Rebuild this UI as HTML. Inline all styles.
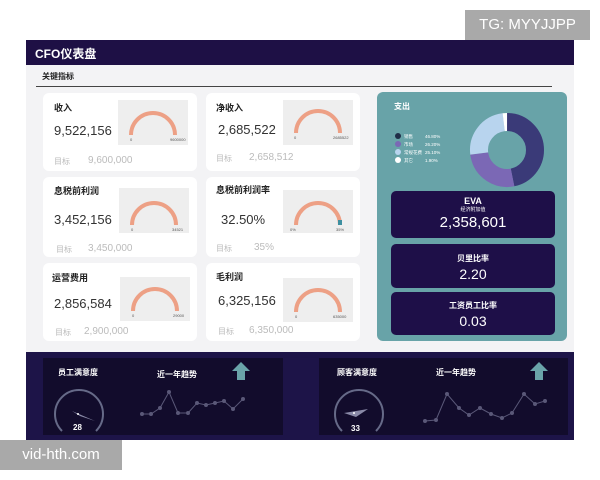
<!DOCTYPE html>
<html><head><meta charset="utf-8"><style>
*{margin:0;padding:0;box-sizing:border-box}
body{width:600px;height:480px;background:#fff;position:relative;overflow:hidden;font-family:"Liberation Sans","Noto Sans CJK SC",sans-serif}
.a{position:absolute}
.card{position:absolute;background:#fff;border-radius:6px}
.t{position:absolute;font-size:9px;font-weight:bold;color:#222}
.v{position:absolute;font-size:13px;color:#333}
.g{position:absolute;font-size:8px;color:#bbb}
.dk{position:absolute;background:#1e0f48;border-radius:5px;left:391px;width:164px;color:#fff;text-align:center}
.w{color:#fff;font-weight:bold;font-size:8px}
</style></head><body>
<div class="a" style="left:26px;top:40px;width:548px;height:400px;background:#f3f3f5"></div>
<div class="a" style="left:26px;top:40px;width:548px;height:25px;background:#1e1045"></div>
<div class="a" style="left:35px;top:45px;color:#fff;font-weight:bold;font-size:12px">CFO仪表盘</div>
<div class="a" style="left:42px;top:71px;font-size:8px;font-weight:bold;color:#222">关键指标</div>
<div class="a" style="left:36px;top:86px;width:516px;height:1px;background:#444"></div>

<div class="card" style="left:43px;top:93px;width:154px;height:78px"></div>
<div class="card" style="left:206px;top:93px;width:154px;height:78px"></div>
<div class="card" style="left:43px;top:177px;width:154px;height:80px"></div>
<div class="card" style="left:206px;top:177px;width:154px;height:80px"></div>
<div class="card" style="left:43px;top:263px;width:154px;height:78px"></div>
<div class="card" style="left:206px;top:263px;width:154px;height:78px"></div>

<div class="t" style="left:54px;top:101px">收入</div>
<div class="v" style="left:54px;top:123px">9,522,156</div>
<div class="g" style="left:54px;top:156px">目标</div><div class="g" style="left:88px;top:155px;font-size:10px">9,600,000</div>
<div class="t" style="left:216px;top:101px">净收入</div>
<div class="v" style="left:218px;top:122px">2,685,522</div>
<div class="g" style="left:216px;top:153px">目标</div><div class="g" style="left:249px;top:152px;font-size:10px">2,658,512</div>
<div class="t" style="left:54px;top:184px">息税前利润</div>
<div class="v" style="left:54px;top:212px">3,452,156</div>
<div class="g" style="left:56px;top:244px">目标</div><div class="g" style="left:88px;top:243px;font-size:10px">3,450,000</div>
<div class="t" style="left:216px;top:183px">息税前利润率</div>
<div class="v" style="left:221px;top:212px">32.50%</div>
<div class="g" style="left:216px;top:243px">目标</div><div class="g" style="left:254px;top:242px;font-size:10px">35%</div>
<div class="t" style="left:52px;top:271px">运营费用</div>
<div class="v" style="left:54px;top:296px">2,856,584</div>
<div class="g" style="left:55px;top:327px">目标</div><div class="g" style="left:84px;top:326px;font-size:10px">2,900,000</div>
<div class="t" style="left:216px;top:270px">毛利润</div>
<div class="v" style="left:218px;top:293px">6,325,156</div>
<div class="g" style="left:218px;top:326px">目标</div><div class="g" style="left:249px;top:325px;font-size:10px">6,350,000</div>

<svg class="a" style="left:0;top:0" width="600" height="480">
<g fill="#eeeeee">
<rect x="118" y="100" width="70" height="45"/><rect x="283" y="100" width="70" height="45"/>
<rect x="119" y="188" width="70" height="45"/><rect x="283" y="190" width="70" height="43"/>
<rect x="120" y="277" width="70" height="44"/><rect x="283" y="278" width="70" height="44"/>
</g>
<g fill="none" stroke="#eda085" stroke-width="4">
<path d="M131 135 A22 22 0 0 1 175 135"/>
<path d="M296 133 A22 22 0 0 1 340 133"/>
<path d="M132 225 A22 22 0 0 1 176 225"/>
<path d="M296 225 A22 22 0 0 1 340 225"/>
<path d="M133 311 A22 22 0 0 1 177 311"/>
<path d="M296 312 A22 22 0 0 1 340 312"/>
</g>
<path d="M340 220 L340 225" stroke="#3d8fa0" stroke-width="4"/>
<g font-size="4" fill="#555" font-family="Liberation Sans">
<text x="130" y="141">0</text><text x="170" y="141">9600000</text>
<text x="294" y="139">0</text><text x="333" y="139">2685522</text>
<text x="131" y="231">0</text><text x="172" y="231">34521</text>
<text x="290" y="231">0%</text><text x="336" y="231">35%</text>
<text x="132" y="317">0</text><text x="173" y="317">29000</text>
<text x="295" y="318">0</text><text x="333" y="318">635000</text>
</g>
</svg>

<div class="a" style="left:377px;top:92px;width:190px;height:249px;background:#68a3a8;border-radius:6px"></div>
<div class="a w" style="left:394px;top:101px;font-size:8px">支出</div>
<svg class="a" style="left:377px;top:92px" width="190" height="100">
<g font-size="4.5" fill="#fff" font-family="Liberation Sans,Noto Sans CJK SC">
<circle cx="21" cy="44" r="3" fill="#1f2e48"/><text x="27" y="46">销售</text><text x="48" y="46">46.80%</text>
<circle cx="21" cy="52" r="3" fill="#7b68b5"/><text x="27" y="54">市场</text><text x="48" y="54">26.20%</text>
<circle cx="21" cy="60" r="3" fill="#b8d4ee"/><text x="27" y="62">常规花费</text><text x="48" y="62">25.10%</text>
<circle cx="21" cy="68" r="3" fill="#fff"/><text x="27" y="70">其它</text><text x="48" y="70">1.90%</text>
</g>
<g transform="translate(130,58)" stroke-width="18" fill="none">
<circle r="28" stroke="#3a3a78" stroke-dasharray="82.3 175.9" transform="rotate(-90)"/>
<circle r="28" stroke="#7b68b5" stroke-dasharray="46.1 175.9" transform="rotate(78.5)"/>
<circle r="28" stroke="#b8d4ee" stroke-dasharray="44.2 175.9" transform="rotate(172.8)"/>
<circle r="28" stroke="#ffffff" stroke-dasharray="3.4 175.9" transform="rotate(263.2)"/>
</g>
</svg>
<div class="dk" style="top:191px;height:47px"><div style="font-size:9px;font-weight:bold;margin-top:5px">EVA</div><div style="font-size:5px">经济附加值</div><div style="font-size:15px;margin-top:1px">2,358,601</div></div>
<div class="dk" style="top:244px;height:44px"><div style="font-size:8px;font-weight:bold;margin-top:9px">贝里比率</div><div style="font-size:14px;margin-top:2px">2.20</div></div>
<div class="dk" style="top:292px;height:43px"><div style="font-size:8px;font-weight:bold;margin-top:8px">工资员工比率</div><div style="font-size:14px;margin-top:2px">0.03</div></div>

<div class="a" style="left:26px;top:352px;width:548px;height:88px;background:#1d1448"></div>
<div class="a" style="left:43px;top:358px;width:240px;height:77px;background:#120c2c"></div>
<div class="a" style="left:319px;top:358px;width:249px;height:77px;background:#120c2c"></div>
<div class="a w" style="left:58px;top:367px">员工满意度</div>
<div class="a w" style="left:157px;top:369px">近一年趋势</div>
<div class="a w" style="left:337px;top:367px">顾客满意度</div>
<div class="a w" style="left:436px;top:367px">近一年趋势</div>
<svg class="a" style="left:0;top:0" width="600" height="480">
<g fill="none" stroke="#666a88" stroke-width="2">
<path d="M62 431 A24 24 0 1 1 96 431"/>
<path d="M342 431 A24 24 0 1 1 376 431"/>
</g>
<path d="M72 411 L95 421 L80 416 Z" fill="#8a8aa8"/>
<path d="M344 413 L368 409 L356 417 Z" fill="#8a8aa8"/>
<circle cx="78" cy="414" r="1" fill="#fff"/><circle cx="354" cy="413" r="1" fill="#fff"/>
<text x="73" y="430" font-size="8" font-weight="bold" fill="#fff" font-family="Liberation Sans">28</text>
<text x="351" y="431" font-size="8" font-weight="bold" fill="#fff" font-family="Liberation Sans">33</text>
<g stroke="#5a5878" fill="#5a5878" stroke-width="1">
<polyline fill="none" points="142,414 151,414 160,408 169,392 178,413 188,413 197,403 206,405 215,403 224,401 233,409 243,399"/>
<polyline fill="none" points="425,421 436,420 447,394 459,408 469,415 480,408 491,414 502,418 512,413 524,394 535,404 545,401"/>
<g stroke="none">
<circle cx="142" cy="414" r="2"/><circle cx="151" cy="414" r="2"/><circle cx="160" cy="408" r="2"/><circle cx="169" cy="392" r="2"/><circle cx="178" cy="413" r="2"/><circle cx="188" cy="413" r="2"/><circle cx="197" cy="403" r="2"/><circle cx="206" cy="405" r="2"/><circle cx="215" cy="403" r="2"/><circle cx="224" cy="401" r="2"/><circle cx="233" cy="409" r="2"/><circle cx="243" cy="399" r="2"/>
<circle cx="425" cy="421" r="2"/><circle cx="436" cy="420" r="2"/><circle cx="447" cy="394" r="2"/><circle cx="459" cy="408" r="2"/><circle cx="469" cy="415" r="2"/><circle cx="480" cy="408" r="2"/><circle cx="491" cy="414" r="2"/><circle cx="502" cy="418" r="2"/><circle cx="512" cy="413" r="2"/><circle cx="524" cy="394" r="2"/><circle cx="535" cy="404" r="2"/><circle cx="545" cy="401" r="2"/>
</g></g>
<path d="M241 362 L250 371 L245 371 L245 380 L237 380 L237 371 L232 371 Z" fill="#6aa4a9"/>
<path d="M539 362 L548 371 L543 371 L543 380 L535 380 L535 371 L530 371 Z" fill="#6aa4a9"/>
</svg>

<div class="a" style="left:465px;top:10px;width:125px;height:30px;background:#a9a9a9;color:#fff;font-size:15px;line-height:30px;text-align:center">TG: MYYJJPP</div>
<div class="a" style="left:0;top:440px;width:122px;height:30px;background:#a9a9a9;color:#fff;font-size:15px;line-height:30px;text-align:center">vid-hth.com</div>
</body></html>
